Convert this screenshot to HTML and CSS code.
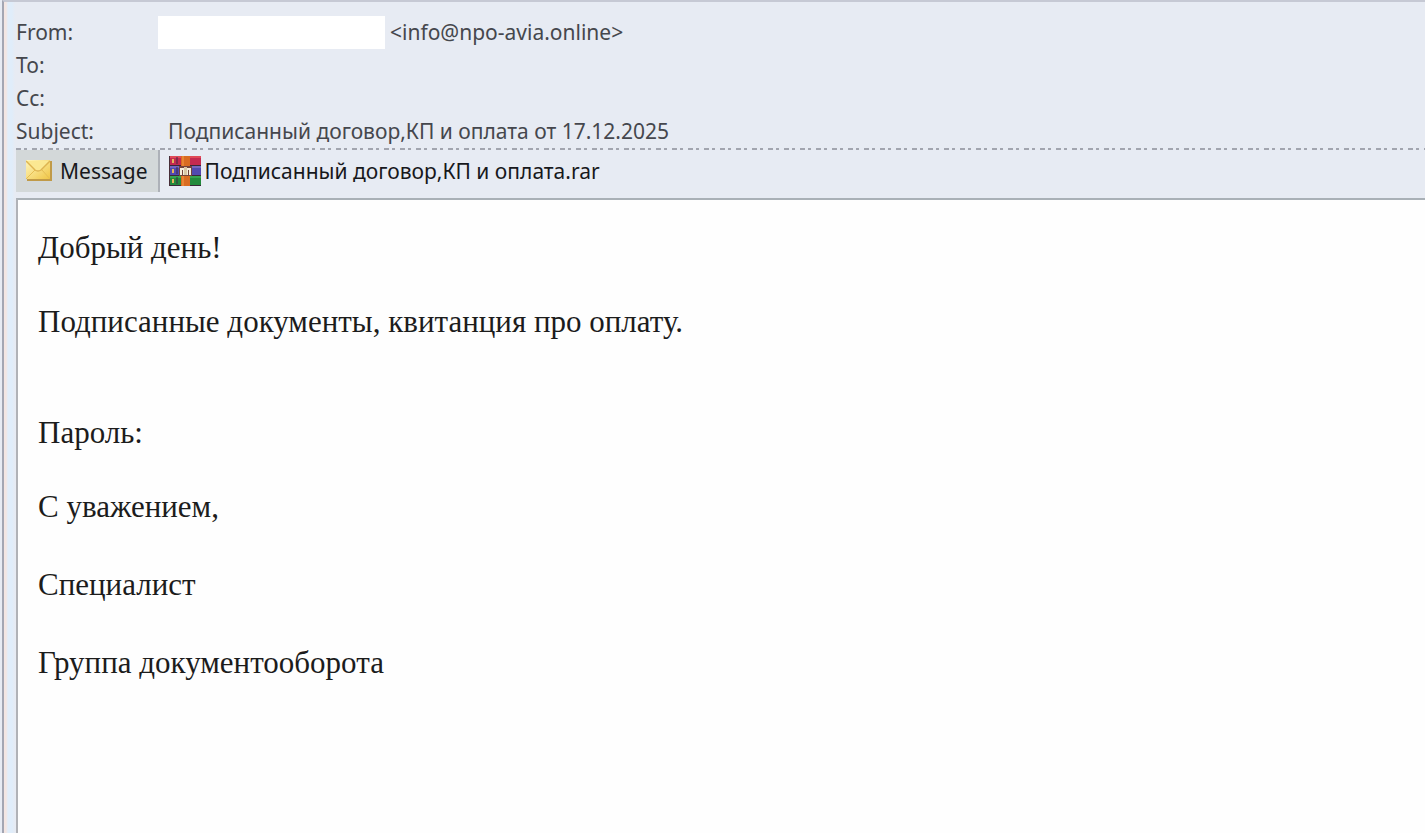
FILE: index.html
```html
<!DOCTYPE html>
<html lang="ru">
<head>
    <meta charset="UTF-8">
    <meta name="viewport" content="width=device-width, initial-scale=1.0">
    <title>Подписанный договор,КП и оплата от 17.12.2025</title>
    <link rel="stylesheet" href="styles.css">
</head>
<body>
    <div class="window">
        <header class="headers">
            <dl class="fields">
                <dt>From:</dt>
                <dd class="sender"><span class="hidden-name"></span><span>&lt;info@npo-avia.online&gt;</span></dd>
                <dt>To:</dt>
                <dd></dd>
                <dt>Cc:</dt>
                <dd></dd>
                <dt>Subject:</dt>
                <dd class="subject">Подписанный договор,КП и оплата от 17.12.2025</dd>
            </dl>
        </header>
        <div class="divider"></div>
        <div class="tabs">
            <button type="button" class="tab active">
                <svg class="mail-icon" viewBox="0 0 26 22">
                    <defs>
                        <linearGradient id="paper" x1="0" y1="0" x2="1" y2="1">
                            <stop offset="0" stop-color="#fff6bd"/>
                            <stop offset="1" stop-color="#f0c646"/>
                        </linearGradient>
                    </defs>
                    <rect x="1" y="1" width="25" height="20" fill="#c09a48"/>
                    <rect x="0" y="0" width="24" height="19" fill="url(#paper)"/>
                    <path d="M0 19 L9 10 M24 19 L16 10" stroke="#e6be55" fill="none"/>
                    <path d="M0 1 L9 10 Q12 12 15 10 L24 1" stroke="#deb452" stroke-width="1.5" fill="#fbe892"/>
                </svg>
                <span>Message</span>
            </button>
            <button type="button" class="tab">
                <svg class="rar-icon" viewBox="0 0 32 30">
                    <rect x="0" y="0" width="32" height="10" fill="#c42a50"/>
                    <rect x="0" y="10" width="32" height="10" fill="#5149b0"/>
                    <rect x="0" y="20" width="32" height="10" fill="#238a3c"/>
                    <path d="M0 9.500h32M0 19.500h32M0 29.500h32" stroke="#3a2838" stroke-width="1"/>
                    <path d="M1 1h31" stroke="#e04a58" stroke-width="2"/>
                    <path d="M1 11h31" stroke="#7468bf" stroke-width="2"/>
                    <path d="M1 21h31" stroke="#36a550" stroke-width="2"/>
                    <path d="M.5 0v30" stroke="#472d38"/>
                    <path d="M4 3v4M4 13v4M4 23v4" stroke="#e5b65c" stroke-width="2"/>
                    <path d="M8 1v7M8 11v7M8 21v7" stroke="#402b42" stroke-width="1"/>
                    <rect x="12" y="0" width="9" height="30" fill="#d96c22"/>
                    <path d="M14 0v30" stroke="#e98534" stroke-width="2"/>
                    <rect x="10" y="10" width="13" height="10" fill="#74443c"/>
                    <path d="M12 19v-6h3v6M18 19v-6h3v6" stroke="#f5eedc" stroke-width="2" fill="none"/>
                    <rect x="15" y="11" width="3" height="8" fill="#d9c8a8"/>
                </svg>
                <span>Подписанный договор,КП и оплата.rar</span>
            </button>
        </div>
        <main class="message">
            <p>Добрый день!</p>
            <p>Подписанные документы, квитанция про оплату.</p>
            <p class="password">Пароль:</p>
            <div class="signature">
                <p>С уважением,</p>
                <p>Специалист</p>
                <p>Группа документооборота</p>
            </div>
        </main>
    </div>
</body>
</html>
```

FILE: styles.css
```css
*{
    margin: 0;
    padding: 0;
    box-sizing: border-box;
}
body{
    background-color: #e7ebf3;
    color: #45474d;
    font-family: "Noto Sans", "Open Sans", sans-serif;
    font-size: 21px;
}
.window{
    display: flex;
    flex-direction: column;
    min-height: 100vh;
    margin-left: 2px;
    padding-left: 12px;
    border-left: 2px solid #a3a6b3;
    border-top: 2px solid #c6c9d4;
    background: linear-gradient(to right, #f3e6e3 0, #f3e6e3 2px, #e0edfa 4px, #e0edfa 8px, #e7ebf3 11px);
}
.fields{
    display: grid;
    grid-template-columns: 142px 1fr;
    grid-auto-rows: 33px;
    line-height: 33px;
    padding-top: 14px;
}
.sender{
    display: flex;
    align-items: center;
    gap: 5px;
}
.hidden-name{
    width: 227px;
    height: 33px;
    background-color: #fff;
}
.subject{
    padding-left: 10px;
}
.divider{
    height: 2px;
    background: repeating-linear-gradient(to right, #a2a5af 0 5px, transparent 5px 8px, #a2a5af 8px 11px, transparent 11px 16px);
}
.tabs{
    display: flex;
    height: 48px;
    color: #17181c;
}
.tab{
    display: flex;
    align-items: center;
    gap: 4px;
    height: 42px;
    padding: 0 9px;
    border: none;
    background: none;
    color: inherit;
    font: inherit;
    cursor: pointer;
}
.tab.active{
    gap: 8px;
    padding: 0 10px;
    background-color: #d3d8d9;
    border-right: 2px solid #adb1b8;
}
.mail-icon{
    width: 26px;
    height: 22px;
}
.rar-icon{
    width: 32px;
    height: 30px;
}
.message{
    flex: 1;
    padding: 29px 20px;
    background-color: #fefefe;
    border-top: 2px solid #a9b0b6;
    border-left: 2px solid #b0b2b7;
    color: #1c1c1c;
    font-family: "Liberation Serif", serif;
    font-size: 31px;
    line-height: 37px;
}
.message p{
    margin-bottom: 37px;
}
.message .password{
    margin-top: 74px;
}
.message .signature p{
    margin-bottom: 41px;
}
```
